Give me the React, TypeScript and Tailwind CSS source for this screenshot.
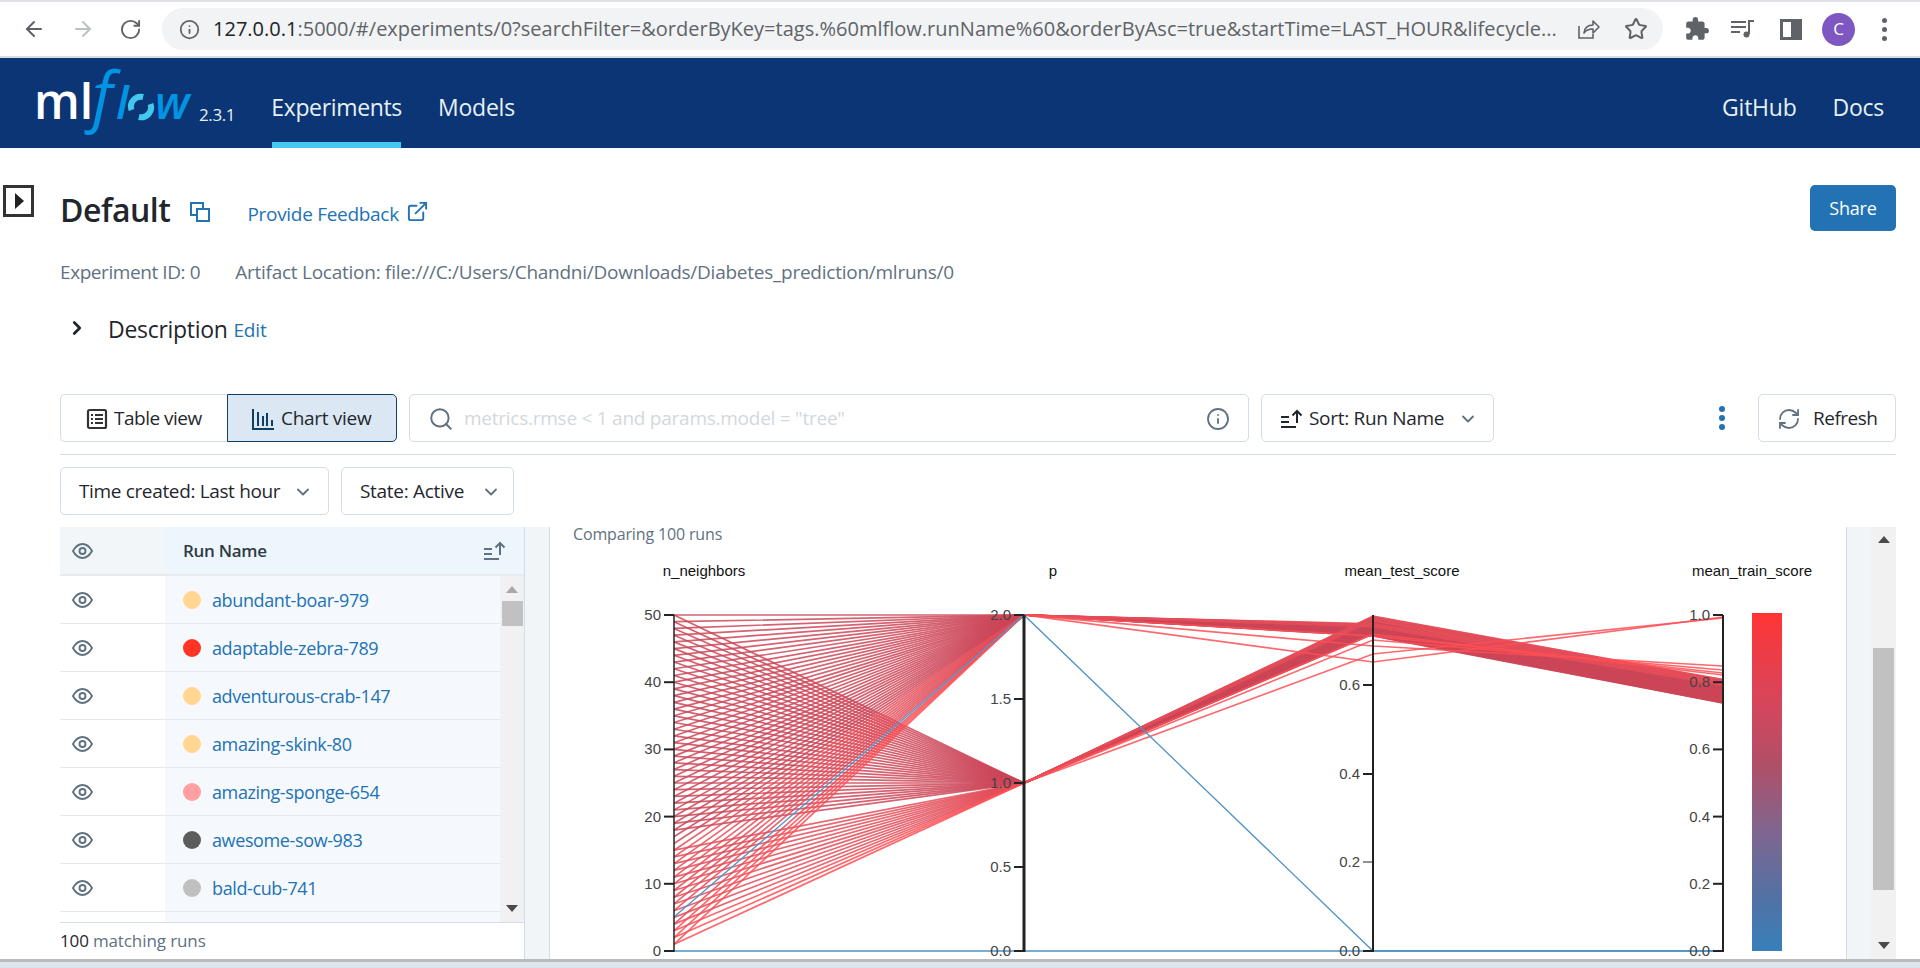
import React from "react";
import { ArrowLeft, ArrowRight, RotateCw, Info, Star, Search, ChevronDown, ChevronRight, RefreshCw, ExternalLink } from "lucide-react";
import { MdExtension } from "react-icons/md";

const URL_TEXT = "/#/experiments/0?searchFilter=&orderByKey=tags.%60mlflow.runName%60&orderByAsc=true&startTime=LAST_HOUR&lifecycle...";

const ShareIcon = () => (
  <svg width="24" height="24" viewBox="0 0 24 24" fill="none" stroke="#5f6368" strokeWidth="1.6">
    <path d="M3 9v12h14v-4" />
    <path d="M8 16c0-5 4-8 9-8V4l6 6-6 6v-4c-4 0-7 1-9 4z" strokeLinejoin="round" />
  </svg>
);

const MediaIcon = () => (
  <svg width="25" height="20" viewBox="0 0 25 20" fill="none" stroke="#5f6368" strokeWidth="2">
    <path d="M1 3h15M1 8h15M1 13h9" />
    <path d="M19 15V2h5" />
    <circle cx="16.5" cy="15.5" r="3" fill="#5f6368" stroke="none" />
  </svg>
);

const PanelIcon = () => (
  <svg width="22" height="21" viewBox="0 0 22 21">
    <rect x="1.5" y="1.5" width="19" height="18" fill="none" stroke="#5f6368" strokeWidth="3" />
    <rect x="11" y="1" width="10" height="19" fill="#5f6368" />
  </svg>
);

const BrowserBar = () => (
  <div className="h-[58px] shrink-0 flex flex-col bg-white">
    <div className="h-[2px] bg-[#dee1e6]" />
    <div className="flex-1 flex items-center pl-[22px] pr-[24px]">
      <ArrowLeft size={24} color="#5f6368" strokeWidth={2} />
      <ArrowRight size={24} color="#bdc1c6" strokeWidth={2} className="ml-[25px]" />
      <RotateCw size={23} color="#5f6368" strokeWidth={2} className="ml-[24px]" />
      <div className="ml-[20px] w-[1501px] h-[42px] rounded-full bg-[#f1f3f4] flex items-center pl-[17px] pr-[15px]">
        <Info size={21} color="#5f6368" strokeWidth={2} />
        <div className="ml-[13px] w-[1349px] text-[20px] leading-[28px] tracking-[0.01px] whitespace-nowrap overflow-hidden text-[#5f6368]">
          <span className="text-[#202124]">127.0.0.1</span>:5000{URL_TEXT}
        </div>
        <div className="ml-[14px]"><ShareIcon /></div>
        <Star size={24} color="#5f6368" strokeWidth={2} className="ml-[24px]" />
      </div>
      <MdExtension size={26} color="#5f6368" className="ml-[21px]" />
      <div className="ml-[20px]"><MediaIcon /></div>
      <div className="ml-[25px]"><PanelIcon /></div>
      <div className="ml-[20px] w-[33px] h-[33px] rounded-full bg-[#7e57c2] text-white text-[17px] flex items-center justify-center">C</div>
      <div className="ml-[27px] flex flex-col gap-[4px]">
        <span className="w-[5px] h-[5px] rounded-full bg-[#5f6368]" />
        <span className="w-[5px] h-[5px] rounded-full bg-[#5f6368]" />
        <span className="w-[5px] h-[5px] rounded-full bg-[#5f6368]" />
      </div>
    </div>
    <div className="h-[2px] bg-[#dadce0]" />
  </div>
);

const Logo = () => (
  <svg width="160" height="90" viewBox="0 0 160 90" className="shrink-0 overflow-visible">
    <text x="-1" y="61" fontFamily="'Open Sans'" fontWeight="600" fontSize="48" fill="#fff">ml</text>
    <text x="57" y="61" fontFamily="'Open Sans'" fontStyle="italic" fontSize="66" fill="#0194e2">f</text>
    <text x="81" y="61" fontFamily="'Open Sans'" fontStyle="italic" fontWeight="600" fontSize="46" fill="#0194e2">l</text>
    <g fill="none" strokeWidth="6" transform="translate(0 10) rotate(-35 106 39)">
      <path d="M96.500 36a10 10 0 0 1 17-4" stroke="#43c9ed" />
      <path d="M115.500 42a10 10 0 0 1-17 4" stroke="#43c9ed" />
    </g>
    <text x="120" y="61" fontFamily="'Open Sans'" fontStyle="italic" fontWeight="600" fontSize="46" fill="#0194e2">w</text>
  </svg>
);

const NavBar = () => (
  <div className="h-[90px] shrink-0 bg-[#0b3574] flex items-stretch pl-[35px] pr-[36px] font-['Open_Sans',sans-serif] text-[#e6f1f5]">
    <div className="flex items-center"><Logo /></div>
    <div className="text-[17px] self-center mt-[24px] ml-[4px] tracking-[-0.4px]">2.3.1</div>
    <div className="ml-[37px] w-[129px] flex flex-col items-center justify-end border-b-[6px] border-[#43c9ed] pb-[19px] text-[23px] leading-[32px] tracking-[-0.35px]">Experiments</div>
    <div className="ml-[37px] flex items-end pb-[25px] text-[23px] leading-[32px] tracking-[-0.25px]">Models</div>
    <div className="flex-1" />
    <div className="flex items-end pb-[25px] text-[23px] leading-[32px] tracking-[-0.25px]">GitHub</div>
    <div className="ml-[36px] flex items-end pb-[25px] text-[23px] leading-[32px] tracking-[-0.25px]">Docs</div>
  </div>
);

const EyeIcon = () => (
  <svg width="21" height="16" viewBox="0 0 21 16" fill="none" stroke="#5f7281" strokeWidth="1.9">
    <path d="M1 8c2.500-4.500 5.700-7 9.500-7s7 2.500 9.500 7c-2.500 4.500-5.700 7-9.500 7s-7-2.500-9.500-7z" />
    <circle cx="10.500" cy="8" r="3" />
  </svg>
);

const SortIcon = ({ c }: { c: string }) => (
  <svg width="23" height="20" viewBox="0 0 23 20" fill="none" stroke={c} strokeWidth="2">
    <path d="M1 8h8M1 13h8M1 18h15" />
    <path d="M17 14V2M12.500 6.500 17 2l4.500 4.500" />
  </svg>
);

const Btn = ({ className, children }: { className: string; children: React.ReactNode }) => (
  <div className={"h-[48px] border border-[#d1dde8] rounded-[5px] flex items-center text-[19px] text-[#1f272d] tracking-[-0.3px] whitespace-nowrap " + className}>{children}</div>
);

const Arrow = ({ up, c = "#4a4a4a" }: { up?: boolean; c?: string }) => (
  <svg width="12" height="7" viewBox="0 0 12 7"><polygon points={up ? "6,0 12,7 0,7" : "0,0 12,0 6,7"} fill={c} /></svg>
);

const RUNS: [string, string][] = [
  ["abundant-boar-979", "#ffd78e"],
  ["adaptable-zebra-789", "#ff3424"],
  ["adventurous-crab-147", "#ffd78e"],
  ["amazing-skink-80", "#ffd78e"],
  ["amazing-sponge-654", "#ff9f9f"],
  ["awesome-sow-983", "#5c5c5c"],
  ["bald-cub-741", "#c0c0c0"],
];

const RunTable = () => (
  <div className="w-[465px] shrink-0 flex flex-col border-r border-[#d1dde8]">
    <div className="h-[49px] shrink-0 flex border-b-2 border-[#e6ebf0]">
      <div className="w-[105px] bg-[#f3f6f9] flex items-center pl-[12px]"><EyeIcon /></div>
      <div className="flex-1 bg-[#eef6fd] flex items-center justify-between pl-[18px] pr-[18px] text-[#2f3a44] text-[17px] font-semibold tracking-[-0.3px]">
        <span>Run Name</span>
        <SortIcon c="#5f7281" />
      </div>
    </div>
    <div className="flex-1 min-h-0 flex">
      <div className="flex-1 min-w-0 overflow-hidden">
        {RUNS.map(([name, color]) => (
          <div key={name} className="h-[48px] flex border-b border-[#e3e9ef]">
            <div className="w-[105px] bg-white flex items-center pl-[12px] pt-[1px]"><EyeIcon /></div>
            <div className="flex-1 bg-[#f5f9fd] flex items-center pl-[18px] pt-[1px] text-[18px] tracking-[-0.38px] text-[#2272b4]">
              <span className="w-[18px] h-[18px] rounded-full mr-[11px]" style={{ backgroundColor: color }} />
              {name}
            </div>
          </div>
        ))}
        <div className="h-[10px] flex">
          <div className="w-[105px] bg-white" />
          <div className="flex-1 bg-[#f5f9fd]" />
        </div>
      </div>
      <div className="w-[24px] shrink-0 bg-[#f1f1f1] flex flex-col items-center pt-[10px] pb-[10px]">
        <Arrow up c="#a8a8a8" />
        <div className="w-[21px] h-[25px] bg-[#c1c1c1] mt-[8px]" />
        <div className="flex-1" />
        <Arrow />
      </div>
    </div>
    <div className="h-[37px] shrink-0 border-t border-[#d1dde8] flex items-center pl-0 text-[17px] tracking-[-0.1px] text-[#5f7281]">
      <span className="text-[#1f272d] mr-[4px]">100</span> matching runs
    </div>
  </div>
);

const X1 = 124, X2 = 474, X3 = 823, X4 = 1173, YT = 74, YB = 410;

function buildRuns() {
  const out: { n: number; d: string; c: string }[] = [];
  const yN = (n: number) => YB - n * ((YB - YT) / 50);
  for (let n = 50; n >= 1; n--) {
    const t = (n - 1) / 49;
    for (const p of [1, 2]) {
      if ((n === 16 || n === 17) && p === 1) continue;
      if (n === 5 && p === 2) continue;
      const yP = p === 2 ? YT : YT + (YB - YT) / 2;
      let yTest = p === 2 ? YT + 8 + 13 * t : YT + 19 * t;
      let yTrain = 137 + 25 * t;
      if (n === 1) { yTest = p === 2 ? 121 : 113; yTrain = p === 2 ? 76 : 77; }
      if (n === 2) { yTest = p === 2 ? 105 : 99; yTrain = p === 2 ? 125 : 129; }
      if (n === 3) { yTest = p === 2 ? 95 : 93; yTrain = p === 2 ? 132 : 134; }
      const c = n <= 3 ? "#fb4f55" : n < 16 ? "#e34e59" : "#cc4658";
      out.push({ n, d: `M${X1} ${yN(n)}L${X2} ${yP}L${X3} ${yTest}L${X4} ${yTrain}`, c });
    }
  }
  return out;
}

const Axis = ({ x, w, ticks }: { x: number; w: number; ticks: [string, number, number][] }) => (
  <g>
    <line x1={x} x2={x} y1={YT} y2={YB + 1} stroke="#222" strokeWidth={w} />
    {ticks.map(([label, y, tw]) => (
      <g key={label}>
        <line x1={x - 10} x2={x} y1={y} y2={y} stroke="#222" strokeWidth={tw} />
        <text x={x - 13} y={y + 5} textAnchor="end" fontSize="15" fontFamily="'Liberation Sans',sans-serif" fill="#444">{label}</text>
      </g>
    ))}
  </g>
);

const Chart = () => {
  const step = (YB - YT) / 5;
  const runs = buildRuns();
  const yAxis: [string, number, number][] = ["0", "10", "20", "30", "40", "50"].map((l, i) => [l, YB - i * step, 2]);
  const trainAxis: [string, number, number][] = ["0.0", "0.2", "0.4", "0.6", "0.8", "1.0"].map((l, i) => [l, YB - i * step, 2]);
  const pAxis: [string, number, number][] = ["0.0", "0.5", "1.0", "1.5", "2.0"].map((l, i) => [l, YB - (i * (YB - YT)) / 4, 2]);
  const testAxis: [string, number, number][] = [["0.0", YB, 2], ["0.2", 321, 1], ["0.4", 233, 2], ["0.6", 144, 2]];
  const label = "'Liberation Sans',sans-serif";
  return (
    <svg width="1296" height="418" viewBox="0 0 1296 418" className="block">
      <defs>
        <linearGradient id="cb" x1="0" y1="0" x2="0" y2="1">
          <stop offset="0" stopColor="#ff3535" />
          <stop offset="0.25" stopColor="#d9455a" />
          <stop offset="0.45" stopColor="#b04f68" />
          <stop offset="0.65" stopColor="#7f6690" />
          <stop offset="0.85" stopColor="#5072a5" />
          <stop offset="1" stopColor="#3780bb" />
        </linearGradient>
      </defs>
      {runs.map((r, i) => (
        <path key={i} d={r.d} fill="none" stroke={r.c} strokeWidth="1.7" opacity="0.85" />
      ))}
      <path d={`M${X1} ${YB - 34}L${X2} ${YT}L${X3} ${YB}L${X4} ${YB}`} fill="none" stroke="#4f94c8" strokeWidth="1.3" />
      <path d={`M${X1} ${YB}L${X4} ${YB}`} fill="none" stroke="#4a90c4" strokeWidth="1.6" />
      <Axis x={X1} w={1.5} ticks={yAxis} />
      <Axis x={X2} w={3} ticks={pAxis} />
      <Axis x={X3} w={2} ticks={testAxis} />
      <Axis x={X4} w={2} ticks={trainAxis} />
      <rect x="1202" y="72" width="30" height="338" fill="url(#cb)" />
      <g fontFamily={label} fontSize="15" fill="#111" textAnchor="middle">
        <text x="154" y="35">n_neighbors</text>
        <text x="503" y="35">p</text>
        <text x="852" y="35">mean_test_score</text>
        <text x="1202" y="35">mean_train_score</text>
      </g>
    </svg>
  );
};

export default function App() {
  return (
    <div className="w-[1920px] h-[968px] overflow-hidden flex flex-col bg-white font-['Open_Sans',sans-serif]">
      <BrowserBar />
      <NavBar />
      <div className="flex-1 min-h-0 flex">
        <div className="w-[60px] shrink-0 pl-[3px] pt-[37px]">
          <svg width="31" height="32" viewBox="0 0 31 32">
            <rect x="1.500" y="1.500" width="28" height="29" fill="none" stroke="#333" strokeWidth="3" />
            <polygon points="12,8 21,16 12,24" fill="#222" />
          </svg>
        </div>
        <div className="flex-1 min-w-0 mr-[24px] flex flex-col">
          <div className="mt-[37px] h-[46px] flex items-center">
            <span className="text-[32px] font-semibold text-[#1f272d] tracking-[-0.5px] leading-[46px] mt-[4px]">Default</span>
            <svg width="22" height="22" viewBox="0 0 22 22" fill="none" stroke="#2272b4" strokeWidth="2" className="ml-[19px] mt-[7px]">
              <path d="M14 7V2H2v12h5" />
              <rect x="8" y="8" width="12" height="12" />
            </svg>
            <span className="ml-[36px] text-[19px] text-[#2272b4] tracking-[-0.3px] mt-[13px]">Provide Feedback</span>
            <ExternalLink size={23} color="#2272b4" strokeWidth={2} className="ml-[7px] mt-[6px]" />
            <div className="flex-1" />
            <div className="w-[86px] h-[46px] rounded-[5px] bg-[#2272b4] text-white text-[18px] tracking-[-0.2px] flex items-center justify-center">Share</div>
          </div>
          <div className="mt-[31px] h-[20px] flex items-center text-[19px] tracking-[-0.25px] text-[#5f7281] whitespace-nowrap">
            <span className="tracking-[-0.42px]">Experiment ID: 0</span>
            <span className="ml-[35px]">Artifact Location: file:///C:/Users/Chandni/Downloads/Diabetes_prediction/mlruns/0</span>
          </div>
          <div className="mt-[38px] h-[20px] flex items-center whitespace-nowrap">
            <ChevronRight size={22} color="#1f272d" strokeWidth={3} className="ml-[6px] mb-[4px]" />
            <span className="ml-[20px] text-[23px] tracking-[-0.3px] text-[#1f272d] mb-[2px]">Description</span>
            <span className="ml-[6px] text-[19px] tracking-[-0.2px] text-[#2272b4]">Edit</span>
          </div>
          <div className="mt-[54px] h-[48px] flex items-center">
            <Btn className="w-[167px] rounded-r-none border-r-0 pl-[25px] pt-[1px]">
              <svg width="22" height="22" viewBox="0 0 22 22" fill="none" stroke="#333" strokeWidth="2.200" className="mr-[6px]">
                <rect x="2" y="2" width="18" height="18" rx="1.500" />
                <path d="M5 7h2M9 7h8M5 11h2M9 11h8M5 15h2M9 15h8" strokeWidth="1.800" />
              </svg>
              <span className="tracking-[-0.5px]">Table view</span>
            </Btn>
            <Btn className="w-[170px] rounded-l-none !border-[#0e3e62] bg-[#dbe7f3] text-[#0e3e62] pl-[23px] pt-[1px]">
              <svg width="24" height="24" viewBox="0 0 24 24" fill="none" stroke="#0e3e62" strokeWidth="2" className="mr-[6px]">
                <path d="M2 2v20h21M7 5v14M12 9v10M16 6v13M21 13v6" />
              </svg>
              Chart view
            </Btn>
            <Btn className="ml-[12px] w-[840px] pl-[18px] pr-[18px] pt-[1px]">
              <Search size={26} color="#5f7281" strokeWidth={1.8} />
              <span className="ml-[10px] flex-1 text-[19px] text-[#d3d8dc] tracking-[-0.25px]">metrics.rmse &lt; 1 and params.model = "tree"</span>
              <Info size={24} color="#5f7281" strokeWidth={1.8} />
            </Btn>
            <Btn className="ml-[12px] w-[233px] pl-[18px] pr-[15px] pt-[1px]">
              <SortIcon c="#1f272d" />
              <span className="ml-[6px] flex-1">Sort: Run Name</span>
              <ChevronDown size={20} color="#5f7281" strokeWidth={2.2} />
            </Btn>
            <div className="flex-1 flex flex-col items-end pr-[33px] gap-[3px]">
              <span className="w-[6px] h-[6px] rounded-full bg-[#2272b4]" />
              <span className="w-[6px] h-[6px] rounded-full bg-[#2272b4]" />
              <span className="w-[6px] h-[6px] rounded-full bg-[#2272b4]" />
            </div>
            <Btn className="w-[138px] pl-[18px] pt-[1px]">
              <RefreshCw size={24} color="#5f7281" strokeWidth={1.8} />
              <span className="ml-[12px] tracking-[-0.5px]">Refresh</span>
            </Btn>
          </div>
          <div className="mt-[12px] h-px bg-[#d1dde8] shrink-0" />
          <div className="mt-[12px] h-[48px] flex items-center gap-[12px]">
            <Btn className="w-[269px] pl-[18px] pr-[15px] pt-[1px]">
              <span className="flex-1 tracking-[-0.35px]">Time created: Last hour</span>
              <ChevronDown size={20} color="#5f7281" strokeWidth={2.2} />
            </Btn>
            <Btn className="w-[173px] pl-[18px] pr-[12px] pt-[1px]">
              <span className="flex-1">State: Active</span>
              <ChevronDown size={20} color="#5f7281" strokeWidth={2.2} />
            </Btn>
          </div>
          <div className="mt-[12px] flex-1 min-h-0 flex">
            <RunTable />
            <div className="w-[25px] shrink-0 bg-[#f2f5f8] border-r border-[#d1dde8]" />
            <div className="flex-1 min-w-0">
              <div className="pl-[23px] text-[16px] leading-[14px] tracking-[-0.15px] text-[#5f7281]">Comparing 100 runs</div>
              <Chart />
            </div>
            <div className="w-[25px] shrink-0 bg-[#f2f5f8] border-l border-[#d1dde8]" />
            <div className="w-[25px] shrink-0 bg-[#f1f1f1] flex flex-col items-center pt-[9px] pb-[10px]">
              <Arrow up />
              <div className="w-[21px] h-[242px] bg-[#c1c1c1] mt-[105px]" />
              <div className="flex-1" />
              <Arrow />
            </div>
          </div>
        </div>
      </div>
      <div className="h-[9px] shrink-0 flex flex-col">
        <div className="h-[3px] bg-[#b9bcbf]" />
        <div className="flex-1 bg-[#dde5ea]" />
      </div>
    </div>
  );
}
